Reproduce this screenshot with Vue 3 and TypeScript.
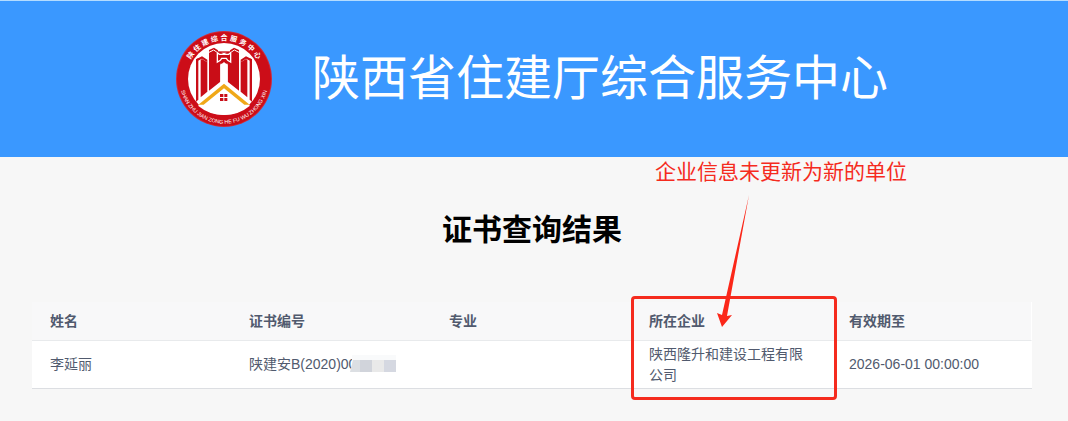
<script setup lang="ts">
interface Certificate {
  name: string
  code: string
  major: string
  company: string
  validUntil: string
}

interface Glyph {
  char: string
  turn: string
}

const columns: string[] = ['姓名', '证书编号', '专业', '所在企业', '有效期至']

const rows: Certificate[] = [
  {
    name: '李延丽',
    code: '陕建安B(2020)00',
    major: '',
    company: '陕西隆升和建设工程有限公司',
    validUntil: '2026-06-01 00:00:00',
  },
]

const sealGlyphs: Glyph[] = Array.from('陕住建综合服务中心').map((char, i) => ({
  char,
  turn: `rotate(${(i - 4) * 13.7} 180 178)`,
}))
</script>

<template>
  <div class="page">
    <header class="banner">
      <svg class="seal" viewBox="36 34 288 288" role="img" aria-label="陕住建综合服务中心">
        <defs>
          <path id="seal-lower-arc" d="M46 178 A134 134 0 0 0 314 178" />
        </defs>
        <circle cx="180" cy="178" r="144" fill="#cf2a3a" />
        <circle cx="180" cy="178" r="141" fill="#cc0d18" />
        <circle cx="180" cy="178" r="108" fill="#fff" />
        <g fill="#c90d17">
          <path d="M96 119 L103 116 V240 L96 246 Z" />
          <path d="M96 119 L114 110 L130 120 V128 L114 117 L96 126 Z" />
          <path d="M110 121 L114 118 L130 128 V216 L110 233 Z" />
          <path d="M135 91 L150 84 L162 92 H198 L210 84 L225 91 V213 L191 186 V132 H169 V186 L135 213 Z" />
          <path d="M264 119 L257 116 V240 L264 246 Z" />
          <path d="M264 119 L246 110 L230 120 V128 L246 117 L264 126 Z" />
          <path d="M250 121 L246 118 L230 128 V216 L250 233 Z" />
        </g>
        <path d="M162 84 H198 V95 H162 Z" fill="#fff" />
        <path d="M135 98 L149 91 L158 97 M225 98 L211 91 L202 97" fill="none" stroke="#fff" stroke-width="3" />
        <path d="M160 99 L166 104 H194 L200 99 V127 L191 122 L187 116 H173 L169 122 L160 127 Z" fill="none" stroke="#fff" stroke-width="4" />
        <path d="M172 99 H188 L182 103 H178 Z M169 137 L180 127 L191 137 V200 H169 Z" fill="#fff" />
        <path d="M180 199 L258 258 Q224 286 180 286 Q136 286 102 258 Z" fill="#fff" />
        <path d="M103 255 H119 L180 206 L241 255 H257 L180 192 Z" fill="#f0a818" />
        <path d="M168 223h10v9h-10z M181 223h9v9h-9z M168 235h10v9h-10z M181 235h9v9h-9z" fill="#c90d17" />
        <text
          v-for="glyph in sealGlyphs"
          :key="glyph.char"
          class="seal-upper"
          x="180"
          y="62"
          :transform="glyph.turn"
        >{{ glyph.char }}</text>
        <text class="seal-lower">
          <textPath href="#seal-lower-arc" startOffset="50%">SHAN ZHU JIAN ZONG HE FU WU ZHONG XIN</textPath>
        </text>
      </svg>
      <h1 class="site-name">陕西省住建厅综合服务中心</h1>
    </header>

    <main class="content">
      <h2 class="title">证书查询结果</h2>
      <div class="result">
        <table class="table">
          <thead>
            <tr>
              <th v-for="column in columns" :key="column" scope="col">{{ column }}</th>
            </tr>
          </thead>
          <tbody>
            <tr v-for="row in rows" :key="row.code">
              <td>{{ row.name }}</td>
              <td>
                <span class="code">{{ row.code }}<svg class="mosaic" viewBox="0 0 46 17" aria-hidden="true">
                  <path d="M2 17 L2 0 H46 V17 Z" fill="#f9fafb" />
                  <path d="M0 17 L3 5 H10 V17 Z" fill="#dcdfe3" />
                  <path d="M10 5h12v12H10z" fill="#d1d4db" />
                  <path d="M22 5h12v12H22z" fill="#e9e9e9" />
                  <path d="M34 5h12v12H34z" fill="#d5d8e1" />
                </svg></span>
              </td>
              <td>{{ row.major }}</td>
              <td>{{ row.company }}</td>
              <td>{{ row.validUntil }}</td>
            </tr>
          </tbody>
        </table>
        <div class="highlight">
          <p class="note">企业信息未更新为新的单位</p>
          <svg class="arrow" viewBox="0 0 40 136" aria-hidden="true">
            <path d="M33 0 L11 121 L16 120 L6 132 L1 118 L6 120 Z" fill="#fb2719" />
          </svg>
        </div>
      </div>
    </main>
  </div>
</template>

<style>
body {
  margin: 0;
  background: #f7f7f7;
}
</style>

<style scoped>
.page {
  font-family: "Liberation Sans", "Noto Sans CJK SC", sans-serif;
  font-size: 14px;
  line-height: 21px;
  color: #515a6e;
}

.banner {
  display: flex;
  align-items: center;
  justify-content: center;
  gap: 40px;
  box-sizing: border-box;
  min-height: 157px;
  padding-right: 4px;
  background: #3a98ff;
  border-top: 1px solid #b4dcff;
}

.seal {
  width: 96px;
  height: 96px;
}

.seal-upper {
  font-size: 21px;
  font-weight: bold;
  fill: #fff;
  text-anchor: middle;
}

.seal-lower {
  font-size: 16px;
  fill: #fff;
  text-anchor: middle;
}

.site-name {
  margin: 0;
  font-size: 48px;
  font-weight: normal;
  line-height: 72px;
  color: #fff;
}

.content {
  padding: 50px 36px 32px 32px;
}

.title {
  margin: 0;
  font-size: 30px;
  font-weight: bold;
  line-height: 45px;
  text-align: center;
  color: #000;
}

.result {
  position: relative;
  margin-top: 50px;
}

.table {
  width: 100%;
  table-layout: fixed;
  border-collapse: separate;
  border-spacing: 0;
  background: #fff;
}

.table th,
.table td {
  box-sizing: border-box;
  padding: 0 18px 0 17px;
  text-align: left;
  vertical-align: middle;
}

.table th:first-child,
.table td:first-child {
  padding-left: 18px;
}

.table th {
  height: 39px;
  font-weight: bold;
  background: #f8f8f9;
  border-bottom: 1px solid #e8eaec;
}

.table th:last-child {
  border-right: 1px solid #fff;
}

.table td {
  height: 48px;
  background: #fff;
  border-bottom: 1px solid #dcdee2;
}

.code {
  position: relative;
  white-space: nowrap;
}

.mosaic {
  position: absolute;
  left: 101px;
  top: -1px;
  width: 46px;
  height: 17px;
}

.highlight {
  position: absolute;
  top: -6px;
  left: calc(60% - 1px);
  box-sizing: border-box;
  width: calc(20% + 6px);
  height: 104px;
  border: 3px solid #f52b1e;
  border-radius: 4px;
}

.note {
  position: absolute;
  left: 21px;
  bottom: 209px;
  margin: 0;
  font-size: 21px;
  line-height: 32px;
  white-space: nowrap;
  color: #f52b1e;
}

.arrow {
  position: absolute;
  left: 82px;
  bottom: 66px;
  width: 40px;
  height: 136px;
}
</style>
